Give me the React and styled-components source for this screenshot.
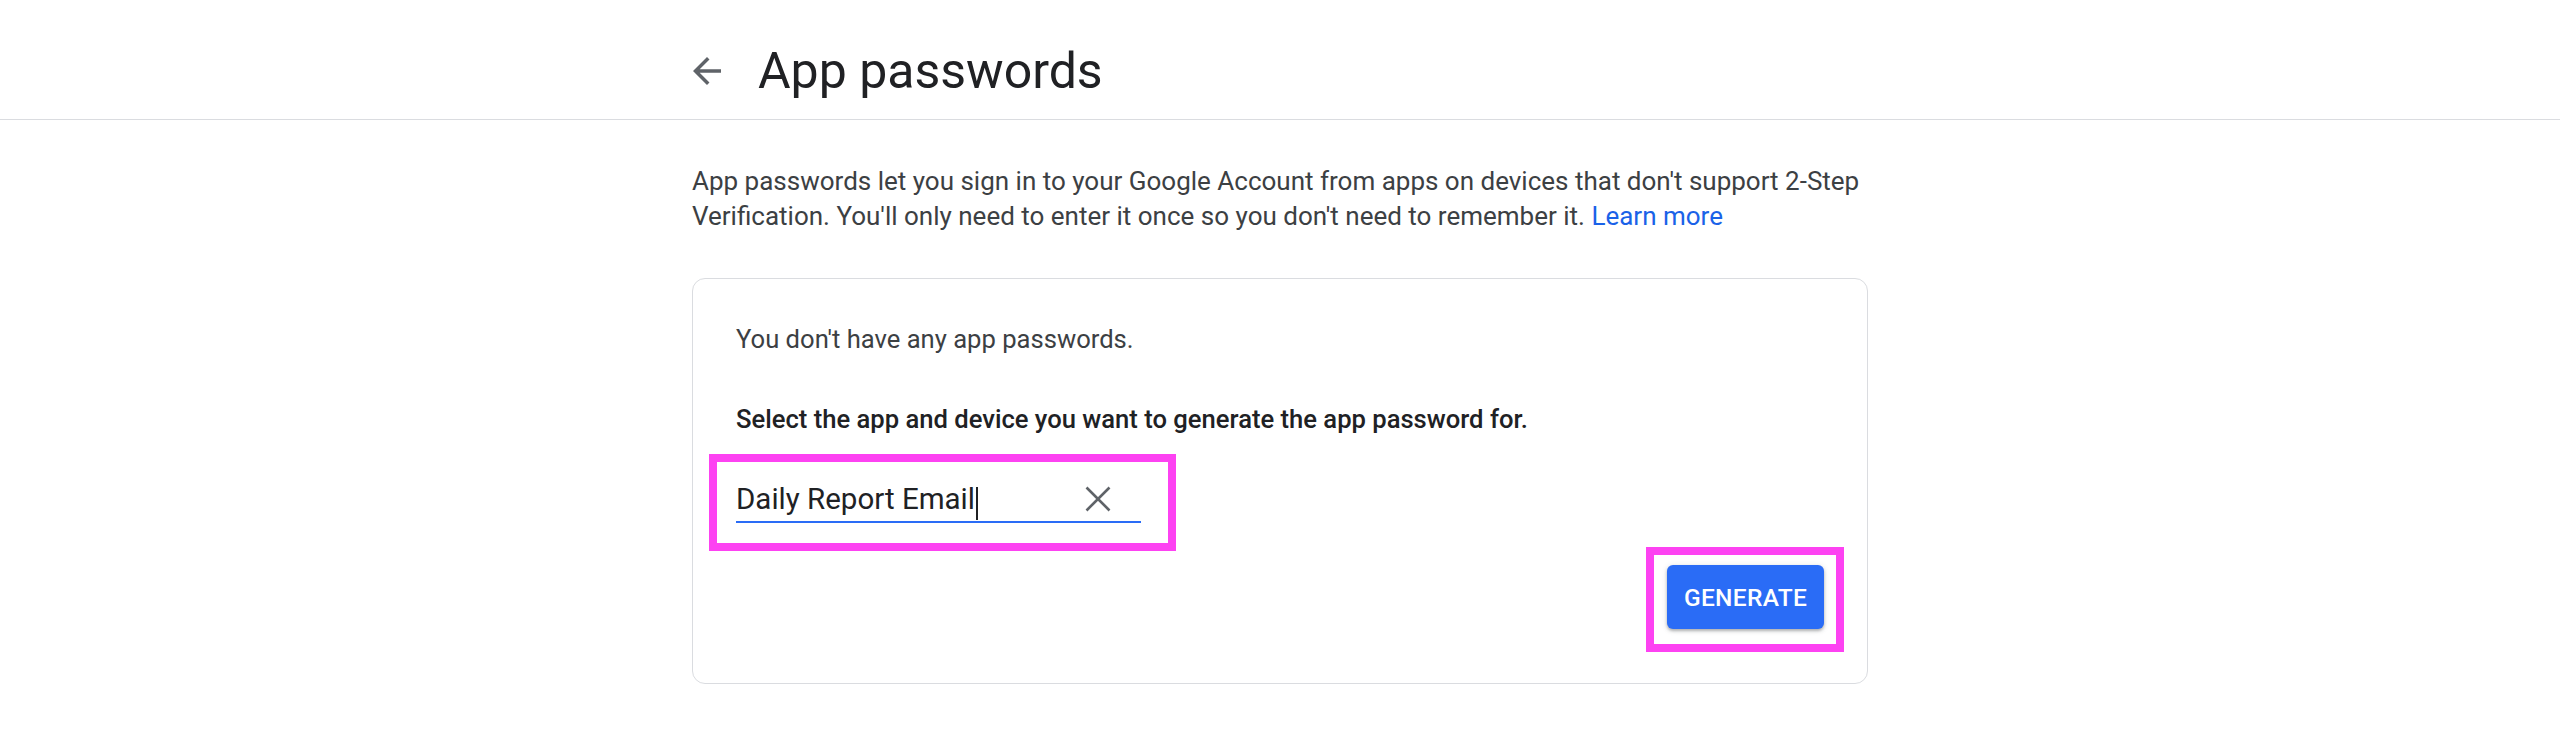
import React from 'react'
import styled, { createGlobalStyle } from 'styled-components'

const GlobalStyle = createGlobalStyle`
  body {
    margin: 0;
    background: #fff;
    font-family: Roboto, "Liberation Sans", Arial, sans-serif;
    color: #202124;
  }
`

export default function App() {
  return (
    <>
      <GlobalStyle />
      <Header>
        <HeaderInner>
          <BackButton aria-label="Back">
            <svg viewBox="0 0 24 24" width="42" height="42">
              <path
                fill="currentColor"
                d="M20 11H7.83l5.59-5.59L12 4l-8 8 8 8 1.41-1.41L7.83 13H20v-2z"
              />
            </svg>
          </BackButton>
          <Title>App passwords</Title>
        </HeaderInner>
      </Header>
      <Main>
        <Intro>
          App passwords let you sign in to your Google Account from apps on
          devices that don't support 2-Step Verification. You'll only need to
          enter it once so you don't need to remember it.{' '}
          <Link href="#">Learn more</Link>
        </Intro>
        <Card>
          <Note>You don't have any app passwords.</Note>
          <Prompt>
            Select the app and device you want to generate the app password
            for.
          </Prompt>
          <Highlight $inset="-32px -35px -28px -27px">
            <Field>
              <FieldText>Daily Report Email</FieldText>
              <Caret />
              <Spacer />
              <ClearIcon viewBox="0 0 26 26" aria-label="Clear">
                <path d="M1.5 1.5l23 23M24.5 1.5l-23 23" />
              </ClearIcon>
            </Field>
          </Highlight>
          <Actions>
            <Highlight $inset="-18px -20px -23px -21px">
              <GenerateButton>Generate</GenerateButton>
            </Highlight>
          </Actions>
        </Card>
      </Main>
    </>
  )
}

const Header = styled.header`
  border-bottom: 1px solid #dadce0;
  padding: 41px 0 18px;
`

const HeaderInner = styled.div`
  max-width: 1176px;
  margin: 0 auto;
  height: 60px;
  display: flex;
  align-items: center;
`

const BackButton = styled.button`
  width: 42px;
  height: 42px;
  margin-left: -6px;
  padding: 0;
  border: none;
  background: none;
  color: #5f6368;
  display: flex;
  cursor: pointer;
`

const Title = styled.h1`
  margin: 0 0 0 30px;
  font-size: 50px;
  line-height: 60px;
  font-weight: 400;
  color: #202124;
`

const Main = styled.main`
  max-width: 1176px;
  margin: 0 auto;
  padding-top: 44px;
`

const Intro = styled.p`
  margin: 0;
  font-size: 26px;
  line-height: 35px;
  color: #3c4043;
`

const Link = styled.a`
  color: #1a62e8;
  text-decoration: none;
`

const Card = styled.section`
  margin-top: 44px;
  border: 1px solid #dadce0;
  border-radius: 13px;
  padding: 43px 43px 54px;
`

const Note = styled.p`
  margin: 0;
  font-size: 25.6px;
  line-height: 35px;
  color: #3c4043;
`

const Prompt = styled.p`
  margin: 45px 0 0;
  font-size: 25.6px;
  line-height: 35px;
  font-weight: 500;
  color: #202124;
`

const Highlight = styled.div`
  position: relative;
  width: fit-content;

  &::after {
    content: '';
    position: absolute;
    inset: ${p => p.$inset};
    border: 8px solid #fd42f2;
    pointer-events: none;
  }
`

const Field = styled.div`
  margin-top: 49px;
  width: 405px;
  height: 35px;
  display: flex;
  align-items: center;
  border-bottom: 2px solid #2a6cf6;
`

const FieldText = styled.span`
  margin-bottom: 8px;
  font-size: 29.5px;
  line-height: 35px;
  color: #202124;
`

const Caret = styled.span`
  width: 2px;
  height: 33px;
  margin-left: 1px;
  background: #202124;
`

const Spacer = styled.span`
  flex: 1;
`

const ClearIcon = styled.svg`
  width: 26px;
  height: 26px;
  margin: 0 30px 10px 0;
  fill: none;
  stroke: #5f6368;
  stroke-width: 2.6;
`

const Actions = styled.div`
  margin-top: 42px;
  display: flex;
  justify-content: flex-end;
`

const GenerateButton = styled.button`
  width: 157px;
  height: 64px;
  border: none;
  border-radius: 6px;
  background: #2a6cf6;
  color: #fff;
  font-family: Roboto, "Liberation Sans", Arial, sans-serif;
  font-size: 24.5px;
  font-weight: 500;
  letter-spacing: 0.3px;
  text-transform: uppercase;
  box-shadow: 0 2px 3px rgba(60, 64, 67, 0.35), 0 1px 6px rgba(60, 64, 67, 0.15);
  cursor: pointer;
`
